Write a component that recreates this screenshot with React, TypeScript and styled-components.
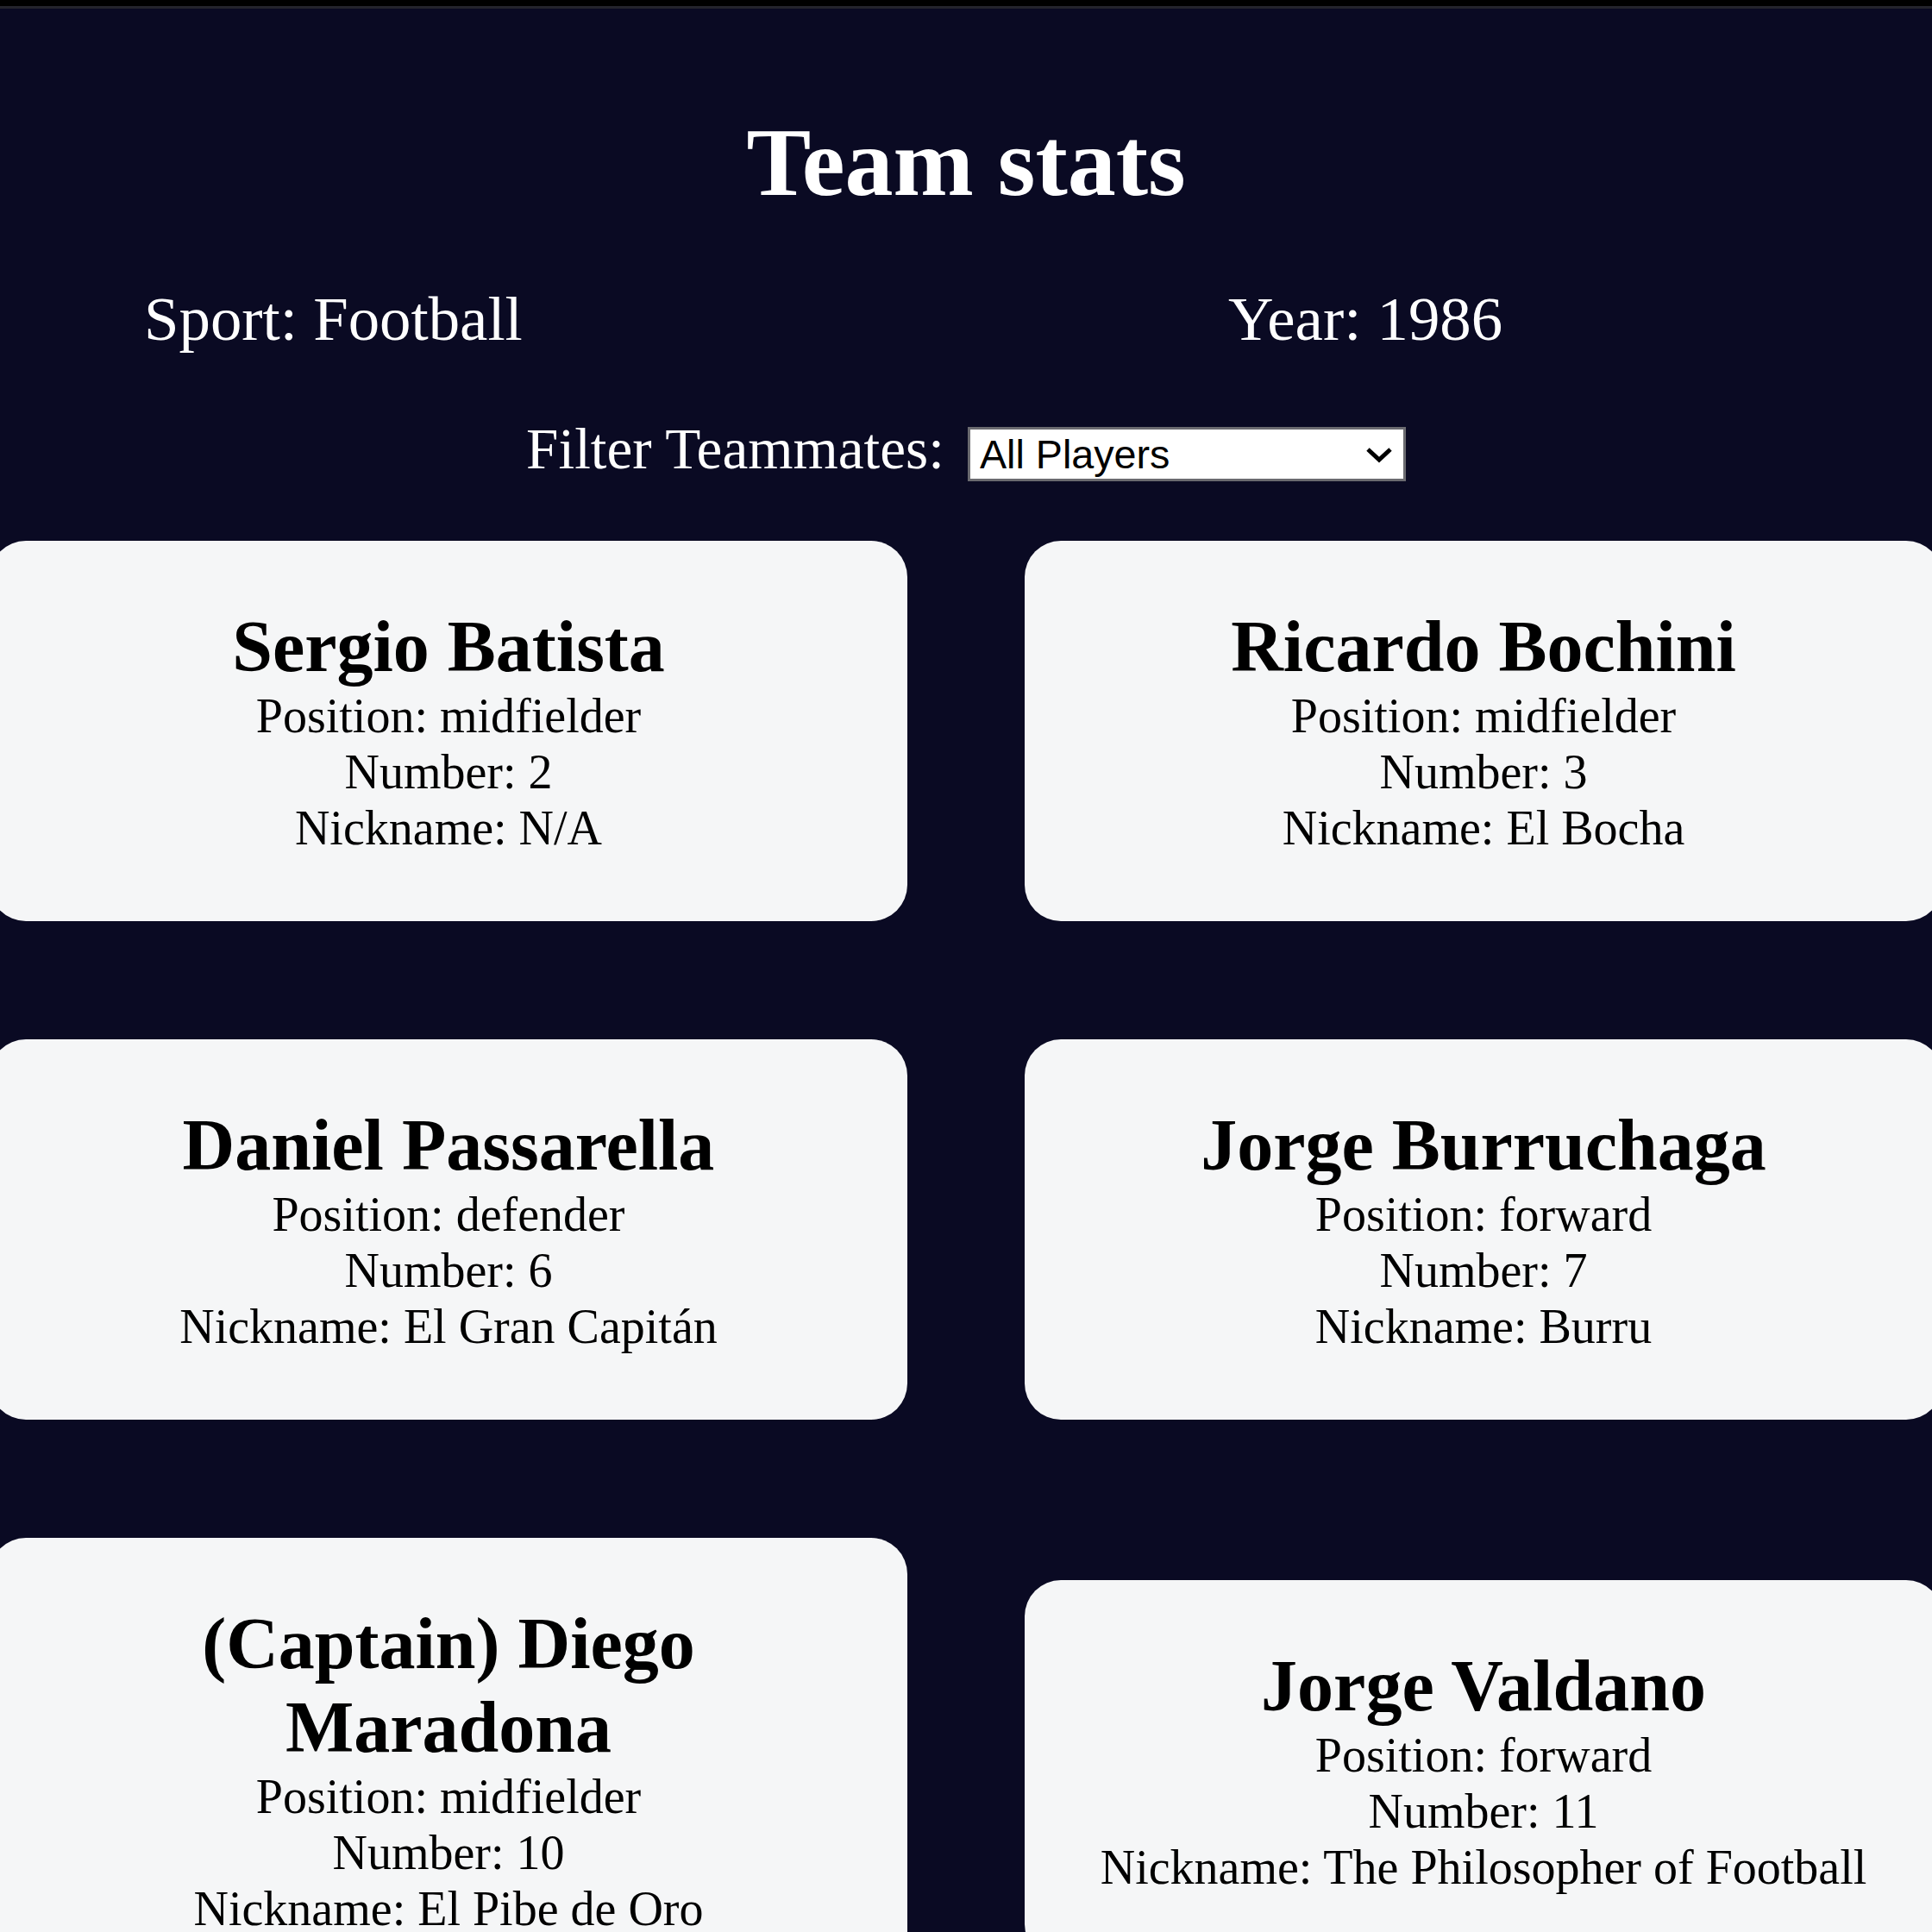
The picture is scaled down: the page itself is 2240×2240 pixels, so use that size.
import React, { useState } from 'react';
import styled, { createGlobalStyle } from 'styled-components';

type Player = {
    name: string;
    position: string;
    number: number;
    isCaptain: boolean;
    nickname: string | null;
};

const players: Player[] = [
    { name: 'Sergio Batista', position: 'midfielder', number: 2, isCaptain: false, nickname: null },
    { name: 'Ricardo Bochini', position: 'midfielder', number: 3, isCaptain: false, nickname: 'El Bocha' },
    { name: 'Daniel Passarella', position: 'defender', number: 6, isCaptain: false, nickname: 'El Gran Capitán' },
    { name: 'Jorge Burruchaga', position: 'forward', number: 7, isCaptain: false, nickname: 'Burru' },
    { name: 'Diego Maradona', position: 'midfielder', number: 10, isCaptain: true, nickname: 'El Pibe de Oro' },
    { name: 'Jorge Valdano', position: 'forward', number: 11, isCaptain: false, nickname: 'The Philosopher of Football' },
];

const GlobalStyle = createGlobalStyle`
    *, *::before, *::after {
        box-sizing: border-box;
    }

    html, body {
        margin: 0;
        padding: 0;
        overflow: hidden;
        background-color: #0a0a23;
    }

    body {
        font-family: "Liberation Serif", "Times New Roman", serif;
        text-align: center;
    }
`;

const Page = styled.div`
    min-height: 2240px;
    background-color: #0a0a23;
`;

const TopBar = styled.div`
    height: 10px;
    background-color: #000;
    border-bottom: 3px solid #24242c;
`;

const Title = styled.h1`
    margin: 114px 0 0;
    font-size: 112px;
    line-height: 129px;
    font-weight: bold;
    color: #fff;
`;

const TeamStats = styled.div`
    display: grid;
    grid-template-columns: 1257px auto;
    margin-top: 75px;
    padding-left: 167px;
    font-size: 72.8px;
    line-height: 84px;
    color: #fff;
    text-align: left;
`;

const FilterRow = styled.div`
    display: flex;
    justify-content: center;
    align-items: flex-start;
    margin-top: 70px;
`;

const OptionsLabel = styled.label`
    font-size: 67.2px;
    line-height: 77px;
    color: #fff;
    margin-right: 27px;
`;

const SelectWrap = styled.div`
    position: relative;
    margin-top: 13px;
`;

const Select = styled.select`
    appearance: none;
    -webkit-appearance: none;
    display: block;
    width: 508px;
    height: 63px;
    padding: 0 60px 0 11px;
    border: 3px solid #6b6b70;
    border-radius: 0;
    background-color: #fff;
    color: #000;
    font-family: "Liberation Sans", Arial, sans-serif;
    font-size: 46.7px;
`;

const Chevron = styled.svg`
    position: absolute;
    right: 15px;
    top: 23px;
    width: 32px;
    height: 19px;
    pointer-events: none;
`;

const CardsOuter = styled.div`
    display: flex;
    justify-content: center;
    margin-top: 68px;
`;

const Cards = styled.div`
    flex-shrink: 0;
    display: grid;
    grid-template-columns: repeat(2, 1064px);
    column-gap: 136px;
    row-gap: 137px;
    align-items: center;
`;

const Card = styled.div`
    background-color: #f5f6f7;
    border-radius: 42px;
    padding: 74px 73px 75px;
    color: #000;
`;

const PlayerName = styled.h2`
    margin: 0;
    font-size: 84px;
    line-height: 97px;
    font-weight: bold;
`;

const Stat = styled.p`
    margin: 0;
    font-size: 56px;
    line-height: 65px;
`;

const App = () => {
    const [filter, setFilter] = useState('all');

    const shown = players.filter(p => {
        if (filter === 'all') return true;
        if (filter === 'nickname') return p.nickname !== null;
        return p.position === filter;
    });

    return (
        <Page>
            <GlobalStyle />
            <TopBar />
            <Title>Team stats</Title>
            <TeamStats>
                <span>Sport: Football</span>
                <span>Year: 1986</span>
            </TeamStats>
            <FilterRow>
                <OptionsLabel htmlFor="players">Filter Teammates:</OptionsLabel>
                <SelectWrap>
                    <Select id="players" value={filter} onChange={e => setFilter(e.target.value)}>
                        <option value="all">All Players</option>
                        <option value="nickname">Nicknames</option>
                        <option value="forward">Position Forward</option>
                        <option value="midfielder">Position Midfielder</option>
                        <option value="defender">Position Defender</option>
                        <option value="goalkeeper">Position Goalkeeper</option>
                    </Select>
                    <Chevron viewBox="0 0 32 19">
                        <polyline points="3,3 16,15 29,3" fill="none" stroke="#000" strokeWidth="5" />
                    </Chevron>
                </SelectWrap>
            </FilterRow>
            <CardsOuter>
                <Cards>
                    {shown.map(p => (
                        <Card key={p.name}>
                            <PlayerName>{p.isCaptain ? '(Captain) ' : ''}{p.name}</PlayerName>
                            <Stat>Position: {p.position}</Stat>
                            <Stat>Number: {p.number}</Stat>
                            <Stat>Nickname: {p.nickname !== null ? p.nickname : 'N/A'}</Stat>
                        </Card>
                    ))}
                </Cards>
            </CardsOuter>
        </Page>
    );
};

export default App;
